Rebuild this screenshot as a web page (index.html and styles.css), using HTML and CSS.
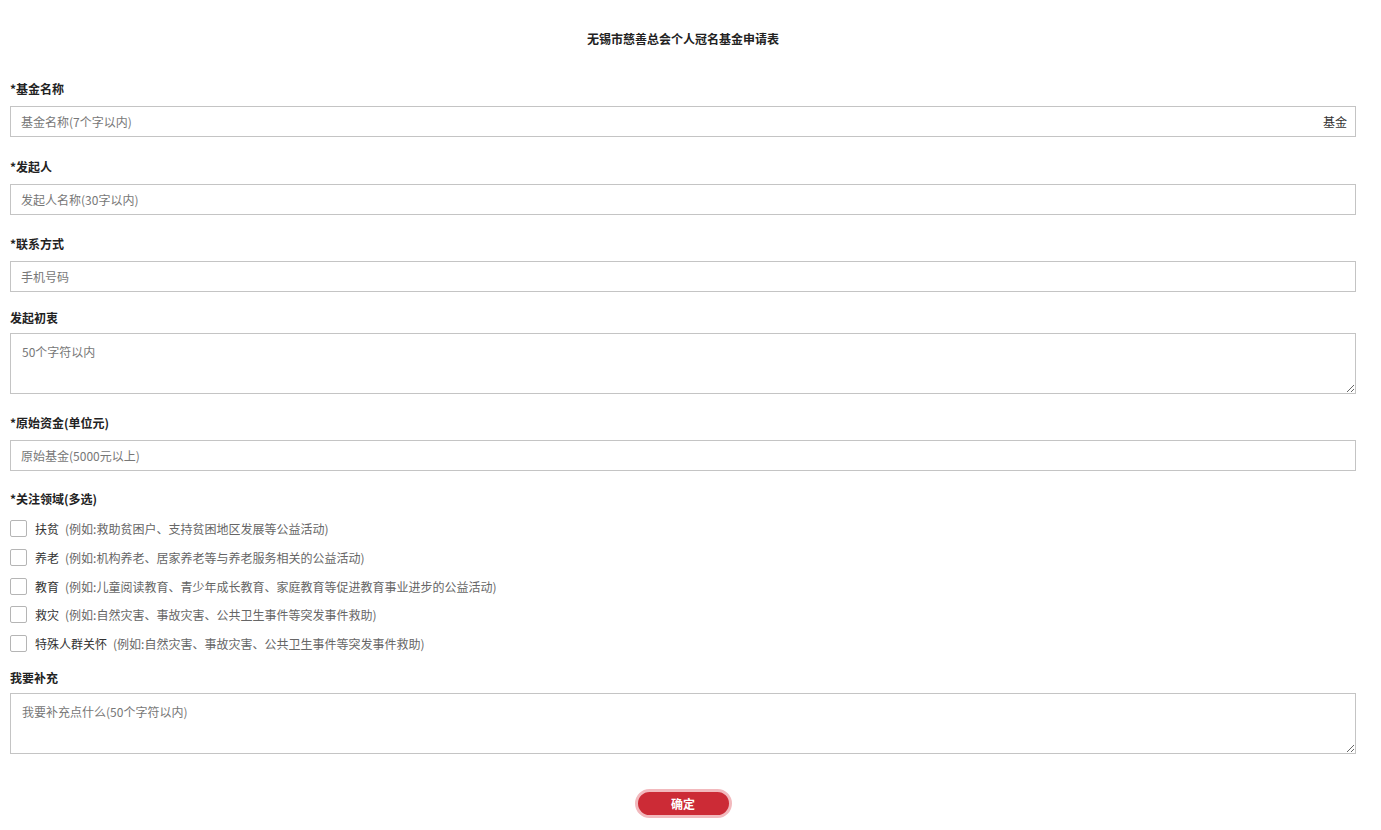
FILE: index.html
```html
<!DOCTYPE html>
<html lang="zh">
<head>
<meta charset="utf-8">
<title>无锡市慈善总会个人冠名基金申请表</title>
<link rel="stylesheet" href="styles.css">
</head>
<body>
<div class="page">
  <h1 class="title">无锡市慈善总会个人冠名基金申请表</h1>
  <form class="form">
    <div class="group first">
      <div class="label">*基金名称</div>
      <div class="input-wrap">
        <input class="input" type="text" placeholder="基金名称(7个字以内)">
        <span class="suffix">基金</span>
      </div>
    </div>
    <div class="group loose">
      <div class="label">*发起人</div>
      <input class="input" type="text" placeholder="发起人名称(30字以内)">
    </div>
    <div class="group">
      <div class="label">*联系方式</div>
      <input class="input" type="text" placeholder="手机号码">
    </div>
    <div class="group tight ta">
      <div class="label">发起初衷</div>
      <textarea class="textarea" placeholder="50个字符以内"></textarea>
    </div>
    <div class="group">
      <div class="label">*原始资金(单位元)</div>
      <input class="input" type="text" placeholder="原始基金(5000元以上)">
    </div>
    <div class="group snug">
      <div class="label">*关注领域(多选)</div>
      <div class="checks">
        <label class="check"><span class="box"></span><span class="name">扶贫</span><span class="hint">(例如:救助贫困户、支持贫困地区发展等公益活动)</span></label>
        <label class="check"><span class="box"></span><span class="name">养老</span><span class="hint">(例如:机构养老、居家养老等与养老服务相关的公益活动)</span></label>
        <label class="check"><span class="box"></span><span class="name">教育</span><span class="hint">(例如:儿童阅读教育、青少年成长教育、家庭教育等促进教育事业进步的公益活动)</span></label>
        <label class="check"><span class="box"></span><span class="name">救灾</span><span class="hint">(例如:自然灾害、事故灾害、公共卫生事件等突发事件救助)</span></label>
        <label class="check"><span class="box"></span><span class="name">特殊人群关怀</span><span class="hint">(例如:自然灾害、事故灾害、公共卫生事件等突发事件救助)</span></label>
      </div>
    </div>
    <div class="group after-checks ta">
      <div class="label">我要补充</div>
      <textarea class="textarea" placeholder="我要补充点什么(50个字符以内)"></textarea>
    </div>
    <div class="actions">
      <button class="btn" type="button">确定</button>
    </div>
  </form>
</div>
</body>
</html>
```
FILE: styles.css
```css
* { box-sizing: border-box; }
html, body { margin: 0; padding: 0; background: #fff; }
body {
  font-family: "Noto Sans CJK SC", "Microsoft YaHei", "Noto Sans", sans-serif;
  font-size: 12px;
  color: #333;
}
.page {
  padding: 0 25px 0 10px;
}
.title {
  margin: 0;
  padding-top: 29px;
  height: 79px;
  line-height: 20px;
  font-size: 12px;
  font-weight: bold;
  text-align: center;
  color: #222;
}
.form { display: flex; flex-direction: column; }
.group { display: flex; flex-direction: column; margin-top: 19px; }
.group.first { margin-top: 0; }
.group.loose { margin-top: 20px; }
.group.tight { margin-top: 16px; }
.group.snug { margin-top: 18px; }
.group.after-checks { margin-top: 15px; }
.label {
  height: 20px;
  line-height: 20px;
  font-weight: bold;
  color: #222;
  margin-bottom: 7px;
}
.group.ta .label { margin-bottom: 5px; }
.input-wrap { position: relative; }
.input, .textarea {
  display: block;
  width: 100%;
  border: 1px solid #c4c4c4;
  border-radius: 0;
  font-family: inherit;
  font-size: 12px;
  color: #333;
  background: #fff;
  outline: none;
}
.input {
  height: 31px;
  padding: 0 10px;
}
.textarea {
  height: 61px;
  padding: 9px 11px;
  resize: vertical;
  line-height: 18px;
}
.input::placeholder, .textarea::placeholder { color: #777; }
.suffix {
  position: absolute;
  right: 9px;
  top: 0;
  line-height: 31px;
  color: #333;
}
.checks {
  display: flex;
  flex-direction: column;
  gap: 9.75px;
  margin-top: 3px;
}
.check {
  display: flex;
  align-items: center;
  height: 19px;
}
.box {
  width: 17px;
  height: 17px;
  border: 1px solid #b5b5b5;
  border-radius: 2px;
  background: #fff;
  margin-right: 8px;
}
.name { color: #333; margin-right: 6px; }
.hint { color: #666; }
.actions {
  display: flex;
  justify-content: center;
  padding-top: 35px;
  padding-bottom: 12px;
}
.btn {
  width: 97px;
  height: 29px;
  border-radius: 15px;
  border: 3px solid #f2b9bd;
  background: #cc2b36;
  color: #fff;
  font-family: inherit;
  font-size: 12px;
  font-weight: bold;
  cursor: pointer;
}
```
